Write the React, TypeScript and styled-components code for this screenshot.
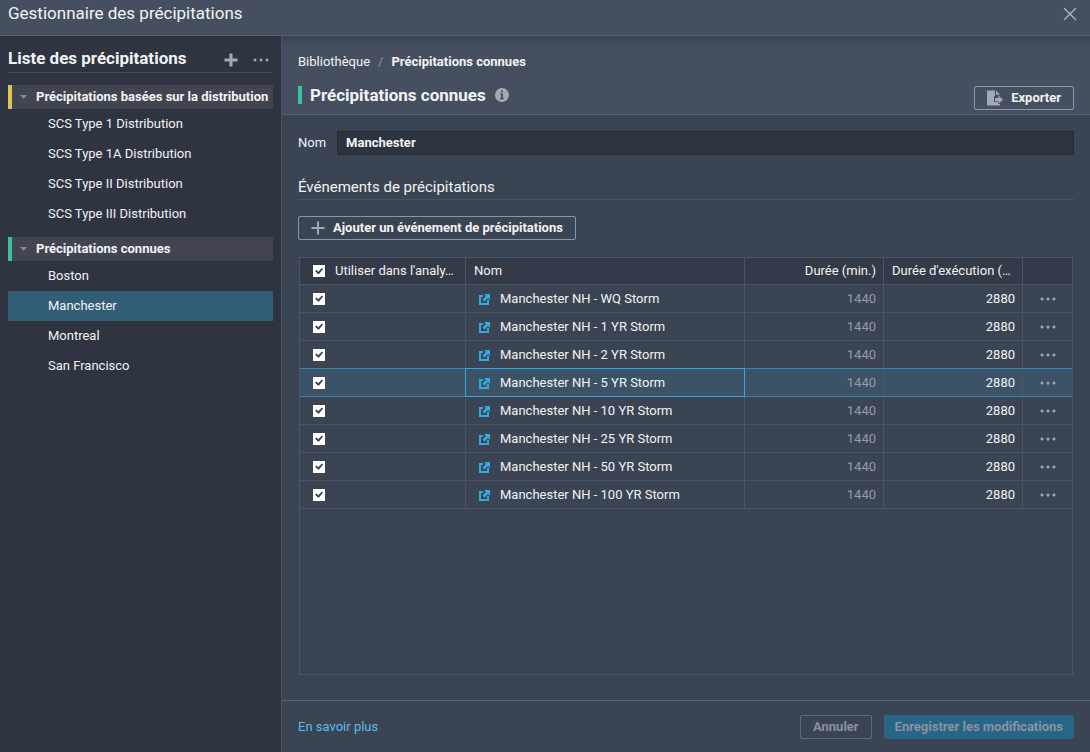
import React from "react";
import styled, { createGlobalStyle } from "styled-components";

const color = {
  bar: "#464f60",
  body: "#3b4453",
  sidebar: "#2e3440",
  line: "#56606f",
  grid: "#4a5564",
  text: "#f2f3f5",
  icon: "#a5a9b3",
  yellow: "#e0c64f",
  green: "#3dc39a",
  blue: "#33a9e0",
};

const GlobalStyle = createGlobalStyle`
  *, *::before, *::after { box-sizing: border-box; }
  body { margin: 0; background: ${color.body}; }
  body, button, input {
    font-family: Roboto, "Noto Sans", sans-serif;
    font-size: 13px;
    line-height: 20px;
    color: ${color.text};
  }
  h1, h2, h3, ul, ol { margin: 0; padding: 0; font-weight: 400; }
  ul, ol { list-style: none; }
  svg { display: block; flex: none; }
`;

const Window = styled.div`
  display: flex;
  flex-direction: column;
  min-height: 100vh;
`;

const TitleBar = styled.header`
  display: flex;
  justify-content: space-between;
  align-items: center;
  height: 36px;
  padding: 0 12px 8px 8px;
  background: ${color.bar};
  border-bottom: 1px solid ${color.line};
`;

const WindowTitle = styled.h1`
  font-size: 17px;
  line-height: 22px;
  padding-bottom: 2px;
`;

const IconButton = styled.button`
  display: flex;
  align-items: center;
  justify-content: center;
  padding: 0;
  border: 0;
  background: none;
  color: ${color.icon};
  cursor: pointer;
`;

const Columns = styled.div`
  display: flex;
  flex: 1;
`;

const Sidebar = styled.nav`
  flex: none;
  width: 282px;
  padding: 8px;
  background: ${color.sidebar};
  border-right: 1px solid #4b5361;
`;

const SidebarHeader = styled.div`
  display: flex;
  align-items: center;
  gap: 15px;
  height: 29px;
  padding-right: 4px;
  border-bottom: 1px solid #454b57;
`;

const SidebarActions = styled.div`
  display: flex;
  align-items: center;
  gap: 15px;
  padding-top: 3px;
`;

const SidebarTitle = styled.h2`
  flex: 1;
  font-size: 17px;
  font-weight: 700;
`;

const Group = styled.section`
  margin-top: 12px;
  & + & { margin-top: 8px; }
`;

const GroupHeader = styled.button<{ $accent: string }>`
  display: flex;
  align-items: center;
  gap: 8px;
  width: 100%;
  height: 24px;
  padding: 0 0 0 8px;
  border: 0;
  border-left: 4px solid ${(p) => p.$accent};
  background: #40454f;
  font-weight: 700;
  white-space: nowrap;
  text-align: left;
`;

const Item = styled.a<{ $selected: boolean }>`
  display: block;
  padding: 5px 8px 5px 40px;
  color: ${color.text};
  text-decoration: none;
  background: ${(p) => (p.$selected ? "#325d76" : "transparent")};
`;

const Main = styled.main`
  display: flex;
  flex: 1;
  flex-direction: column;
  min-width: 0;
`;

const PageHeader = styled.div`
  display: flex;
  justify-content: space-between;
  align-items: flex-end;
  padding: 16px 16px 4px;
  border-bottom: 1px solid ${color.line};
  background: linear-gradient(#3c4452, ${color.bar} 12px);
`;

const HeaderText = styled.div`
  display: flex;
  flex-direction: column;
  gap: 13px;
  padding-bottom: 5px;
`;

const Crumbs = styled.ol`
  display: flex;
  gap: 8px;
`;

const CrumbLink = styled.a`
  color: ${color.text};
  text-decoration: none;
`;

const CrumbDivider = styled.span`
  margin-left: 8px;
  color: #8f96a3;
`;

const PageTitle = styled.div`
  display: flex;
  align-items: center;
  gap: 8px;
  height: 20px;
`;

const Accent = styled.span`
  width: 4px;
  height: 18px;
  background: ${color.green};
`;

const PageHeading = styled.h2`
  font-size: 17px;
  font-weight: 700;
`;

const Button = styled.button<{ $kind?: "outline" | "primary" }>`
  display: inline-flex;
  align-items: center;
  gap: 8px;
  height: 24px;
  padding: 0 ${(p) => (p.$kind === "primary" ? 10 : 12)}px;
  border: 1px solid ${(p) => (p.$kind === "primary" ? "#276689" : "#8797ab")};
  border-radius: 2px;
  background: ${(p) => (p.$kind === "primary" ? "#276689" : "transparent")};
  color: ${color.text};
  font-weight: 700;
  white-space: nowrap;

  &:disabled {
    color: #8b929d;
    ${(p) => p.$kind !== "primary" && "border-color: #5d6a7b;"}
  }
`;

const Content = styled.div`
  display: flex;
  flex: 1;
  flex-direction: column;
  align-items: stretch;
  padding: 16px 16px 25px;
`;

const Field = styled.div`
  display: flex;
  align-items: center;
  gap: 11px;
`;

const TextInput = styled.input`
  flex: 1;
  min-width: 0;
  height: 24px;
  padding: 0 8px 2px;
  border: 1px solid #252b35;
  background: #2d333f;
  font-weight: 700;
  outline: 0;
`;

const SectionTitle = styled.h3`
  margin: 21px 0 16px;
  padding-bottom: 1px;
  border-bottom: 1px solid ${color.grid};
  font-size: 15px;
  line-height: 22px;
`;

const Toolbar = styled.div`
  display: flex;
  margin-bottom: 17px;
`;

const GridFrame = styled.div`
  flex: 1;
  margin: 0 1px;
  border: 1px solid ${color.grid};
`;

const Grid = styled.table`
  width: 100%;
  table-layout: fixed;
  border-collapse: separate;
  border-spacing: 0;
`;

const Cell = styled.td<{ $align?: "right" | "center"; $muted?: boolean }>`
  height: 28px;
  padding: 0 7px 0 8px;
  border-right: 1px solid ${color.grid};
  border-bottom: 1px solid ${color.grid};
  text-align: ${(p) => p.$align ?? "left"};
  color: ${(p) => (p.$muted ? "#959ba6" : color.text)};
  overflow: hidden;
  text-overflow: ellipsis;
  white-space: nowrap;
  &:last-child { border-right: 0; }
`;

const HeadCell = styled(Cell).attrs({ as: "th", scope: "col" })`
  height: 27px;
  background: #343a47;
  font-weight: 400;
`;

const Row = styled.tr<{ $selected: boolean }>`
  ${(p) =>
    p.$selected &&
    `
    & > td {
      background: #3c5267;
      border-bottom-color: #3285ad;
      box-shadow: 0 -1px 0 #3285ad;
    }
    & > td:nth-child(2) {
      position: relative;
      border-color: ${color.blue};
      box-shadow: 0 -1px 0 ${color.blue}, -1px 0 0 ${color.blue}, -1px -1px 0 ${color.blue};
    }
  `}
`;

const CellContent = styled.div<{ $gap: number; $indent: number }>`
  display: flex;
  align-items: center;
  gap: ${(p) => p.$gap}px;
  padding-left: ${(p) => p.$indent}px;
`;

const Check = styled.input.attrs({ type: "checkbox" })`
  flex: none;
  appearance: none;
  width: 12px;
  height: 12px;
  margin: 0;
  background: #fff;

  &:checked::before {
    content: "";
    display: block;
    width: 12px;
    height: 12px;
    background: #343a47;
    clip-path: polygon(2px 6px, 4px 5px, 5px 7px, 9px 3px, 10px 4px, 6px 9px, 5px 9px);
  }
`;

const MenuButton = styled(IconButton)`
  width: 100%;
  height: 20px;
`;

const Footer = styled.footer`
  display: flex;
  align-items: center;
  gap: 12px;
  height: 52px;
  padding: 0 16px;
  border-top: 1px solid #596575;
`;

const HelpLink = styled.a`
  margin-right: auto;
  color: #56bdf0;
  text-decoration: none;
`;

const Dots = () => (
  <svg width="16" height="4" viewBox="0 0 16 4" fill="currentColor" aria-hidden="true">
    <circle cx="2" cy="2" r="1.5" />
    <circle cx="8" cy="2" r="1.5" />
    <circle cx="14" cy="2" r="1.5" />
  </svg>
);

const CloseIcon = () => (
  <svg width="16" height="16" viewBox="0 0 16 16" stroke="#b9bec8" strokeWidth="1.1" aria-hidden="true">
    <path d="M2 2 14 14M14 2 2 14" />
  </svg>
);

const PlusIcon = ({ weight }: { weight: number }) => (
  <svg width="14" height="14" viewBox="0 0 14 14" stroke={color.icon} strokeWidth={weight} aria-hidden="true">
    <path d="M7 0.500V13.500M0.500 7H13.500" />
  </svg>
);

const Caret = () => (
  <svg width="8" height="4" viewBox="0 0 8 4" fill="#838d9c" aria-hidden="true">
    <path d="M0 0H7L3.500 4Z" />
  </svg>
);

const InfoIcon = () => (
  <svg width="16" height="16" viewBox="0 0 16 16" aria-hidden="true">
    <circle cx="8" cy="8" r="7" fill={color.icon} />
    <path d="M7 3.500H9V5.300H7ZM6.200 6.600H9V11H10V12.200H6V11H7V7.800H6.200Z" fill="#464f5a" />
  </svg>
);

const ExportIcon = () => (
  <svg width="16" height="16" viewBox="0 0 16 16" fill={color.icon} aria-hidden="true">
    <path d="M0 0.500H8V6H7V12H11V15.500H0Z" />
    <path d="M9 0.500 13 4.800H9Z" />
    <path d="M8 8H11.500V5.500L16 9.700 11.500 14V11.200H8Z" />
    <path d="M11 14H13V15.500H11Z" />
  </svg>
);

const OpenIcon = () => (
  <svg width="12" height="12" viewBox="0 0 12 12" fill={color.blue} aria-hidden="true">
    <path d="M1 2H5V4H3V10H9V7H11V12H1Z" />
    <path d="M6 1H12V7L10 5 6.500 8.500 4.500 6.500 8 3Z" />
  </svg>
);

const groups = [
  {
    name: "Précipitations basées sur la distribution",
    accent: color.yellow,
    items: [
      "SCS Type 1 Distribution",
      "SCS Type 1A Distribution",
      "SCS Type II Distribution",
      "SCS Type III Distribution",
    ],
  },
  {
    name: "Précipitations connues",
    accent: color.green,
    items: ["Boston", "Manchester", "Montreal", "San Francisco"],
  },
];

const storms = ["WQ", "1 YR", "2 YR", "5 YR", "10 YR", "25 YR", "50 YR", "100 YR"];

export default function App() {
  return (
    <Window>
      <GlobalStyle />
      <TitleBar>
        <WindowTitle>Gestionnaire des précipitations</WindowTitle>
        <IconButton aria-label="Fermer">
          <CloseIcon />
        </IconButton>
      </TitleBar>
      <Columns>
        <Sidebar>
          <SidebarHeader>
            <SidebarTitle>Liste des précipitations</SidebarTitle>
            <SidebarActions>
              <IconButton aria-label="Ajouter">
                <PlusIcon weight={3} />
              </IconButton>
              <IconButton aria-label="Plus d'options">
                <Dots />
              </IconButton>
            </SidebarActions>
          </SidebarHeader>
          {groups.map((group) => (
            <Group key={group.name}>
              <GroupHeader $accent={group.accent} aria-expanded="true">
                <Caret />
                {group.name}
              </GroupHeader>
              <ul>
                {group.items.map((item) => (
                  <li key={item}>
                    <Item href="#" $selected={item === "Manchester"}>
                      {item}
                    </Item>
                  </li>
                ))}
              </ul>
            </Group>
          ))}
        </Sidebar>
        <Main>
          <PageHeader>
            <HeaderText>
              <Crumbs>
                <li>
                  <CrumbLink href="#">Bibliothèque</CrumbLink>
                  <CrumbDivider>/</CrumbDivider>
                </li>
                <li>
                  <b>Précipitations connues</b>
                </li>
              </Crumbs>
              <PageTitle>
                <Accent />
                <PageHeading>Précipitations connues</PageHeading>
                <InfoIcon />
              </PageTitle>
            </HeaderText>
            <Button>
              <ExportIcon />
              Exporter
            </Button>
          </PageHeader>
          <Content>
            <Field>
              <label htmlFor="name">Nom</label>
              <TextInput id="name" defaultValue="Manchester" />
            </Field>
            <SectionTitle>Événements de précipitations</SectionTitle>
            <Toolbar>
              <Button>
                <PlusIcon weight={2} />
                Ajouter un événement de précipitations
              </Button>
            </Toolbar>
            <GridFrame>
              <Grid>
                <colgroup>
                  <col style={{ width: 166 }} />
                  <col />
                  <col style={{ width: 139 }} />
                  <col style={{ width: 139 }} />
                  <col style={{ width: 49 }} />
                </colgroup>
                <thead>
                  <tr>
                    <HeadCell>
                      <CellContent $gap={10} $indent={5}>
                        <Check id="use-all" defaultChecked />
                        <label htmlFor="use-all">Utiliser dans l'analy…</label>
                      </CellContent>
                    </HeadCell>
                    <HeadCell>Nom</HeadCell>
                    <HeadCell $align="right">Durée (min.)</HeadCell>
                    <HeadCell>Durée d'exécution (…</HeadCell>
                    <HeadCell />
                  </tr>
                </thead>
                <tbody>
                  {storms.map((storm) => (
                    <Row key={storm} $selected={storm === "5 YR"}>
                      <Cell>
                        <CellContent $gap={10} $indent={5}>
                          <Check aria-label={`Utiliser ${storm}`} defaultChecked />
                        </CellContent>
                      </Cell>
                      <Cell>
                        <CellContent $gap={10} $indent={4}>
                          <OpenIcon />
                          <span>Manchester NH - {storm} Storm</span>
                        </CellContent>
                      </Cell>
                      <Cell $align="right" $muted>
                        1440
                      </Cell>
                      <Cell $align="right">2880</Cell>
                      <Cell>
                        <MenuButton aria-label={`Options ${storm}`}>
                          <Dots />
                        </MenuButton>
                      </Cell>
                    </Row>
                  ))}
                </tbody>
              </Grid>
            </GridFrame>
          </Content>
          <Footer>
            <HelpLink href="#">En savoir plus</HelpLink>
            <Button disabled>Annuler</Button>
            <Button $kind="primary" disabled>
              Enregistrer les modifications
            </Button>
          </Footer>
        </Main>
      </Columns>
    </Window>
  );
}
